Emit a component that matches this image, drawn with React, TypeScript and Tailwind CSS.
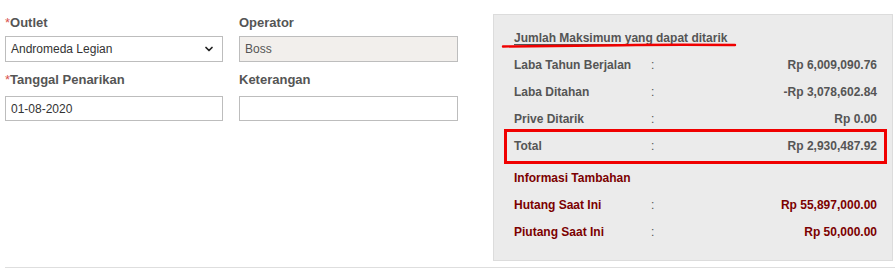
import { ChevronDown } from 'lucide-react'

const ROWS = [
  { label: 'Laba Tahun Berjalan', value: 'Rp 6,009,090.76' },
  { label: 'Laba Ditahan',        value: '-Rp 3,078,602.84' },
  { label: 'Prive Ditarik',       value: 'Rp 0.00' },
]

const EXTRA = [
  { label: 'Hutang Saat Ini',  value: 'Rp 55,897,000.00' },
  { label: 'Piutang Saat Ini', value: 'Rp 50,000.00' },
]

function Label({ text, required }: { text: string; required?: boolean }) {
  return (
    <label className="block h-[18px] leading-[18px] text-[13px] font-bold text-[#555]">
      {required && <span className="font-normal text-[#d9534f]">*</span>}
      {text}
    </label>
  )
}

function Row({ label, value, maroon }: { label: string; value: string; maroon?: boolean }) {
  return (
    <div className={`flex h-[27px] items-center text-[12px] font-bold ${maroon ? 'text-[#7b0000]' : 'text-[#555]'}`}>
      <span className="w-[137px] shrink-0">{label}</span>
      <span className="font-normal text-[#555]">:</span>
      <span className="ml-auto">{value}</span>
    </div>
  )
}

export default function App() {
  return (
    <div className="w-[895px] h-[271px] bg-white font-['Liberation_Sans',Arial,sans-serif]">
      <div className="flex h-[268px] border-b border-[#dedede] ml-[5px]">

        {/* Form */}
        <div className="grid grid-cols-[218px_219px] gap-x-[16px] w-[488px] pt-[14px] content-start">
          <div>
            <Label text="Outlet" required />
            <div className="mt-[4px] flex h-[26px] items-center border border-[#bdbdbd] bg-white pl-[5px] pr-[7px] text-[12px] text-[#333]">
              <span>Andromeda Legian</span>
              <ChevronDown size={12} strokeWidth={3.5} className="ml-auto text-[#222]" />
            </div>
          </div>
          <div>
            <Label text="Operator" />
            <div className="mt-[4px] flex h-[26px] items-center border border-[#bdbdbd] bg-[#f2efec] pl-[5px] text-[12px] text-[#555]">
              Boss
            </div>
          </div>
          <div className="mt-[9px]">
            <Label text="Tanggal Penarikan" required />
            <div className="mt-[7px] flex h-[25px] items-center border border-[#bdbdbd] bg-white pl-[5px] text-[12px] text-[#333]">
              01-08-2020
            </div>
          </div>
          <div className="mt-[9px]">
            <Label text="Keterangan" />
            <div className="mt-[7px] h-[25px] border border-[#bdbdbd] bg-white" />
          </div>
        </div>

        {/* Summary panel */}
        <div className="relative mt-[14px] h-[247px] w-[400px] border border-[#dcdcdc] bg-[#ebebeb] pt-[9px] pl-[10px] pr-[5px]">
          <div className="flex h-[27px] items-center px-[10px] text-[12px] font-bold text-[#555] underline underline-offset-2">
            Jumlah Maksimum yang dapat ditarik
          </div>
          <svg className="absolute left-[7px] top-[27px]" width="236" height="7" viewBox="0 0 236 7">
            <path d="M2 4.5 Q 70 4 120 3.2 T 234 3" fill="none" stroke="#f00000" strokeWidth="2.4" strokeLinecap="round" />
          </svg>
          <div className="px-[10px]">
            {ROWS.map((r) => <Row key={r.label} {...r} />)}
          </div>
          <div className="-mt-[3px] border-[3px] border-[#f00000] px-[7px] pb-[2px]">
            <Row label="Total" value="Rp 2,930,487.92" />
          </div>
          <div className="px-[10px]">
            <div className="flex h-[27px] items-center text-[12px] font-bold text-[#7b0000]">Informasi Tambahan</div>
            {EXTRA.map((r) => <Row key={r.label} {...r} maroon />)}
          </div>
        </div>
      </div>
    </div>
  )
}
